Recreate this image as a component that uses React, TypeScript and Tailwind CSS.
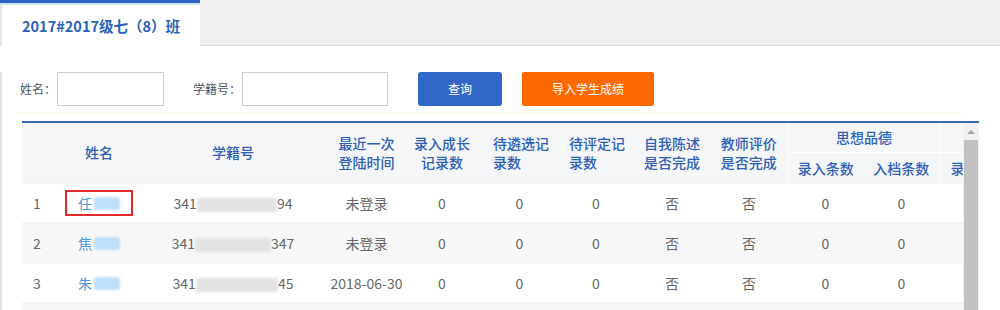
const rows = [
  { no: 1, first: '任', idTail: '94', blurW: 80, login: '未登录', boxed: true },
  { no: 2, first: '焦', idTail: '347', blurW: 76, login: '未登录', boxed: false },
  { no: 3, first: '朱', idTail: '45', blurW: 82, login: '2018-06-30', boxed: false },
]

// last column is the clipped start of the next group
const cols = [40, 74, 194, 73, 78, 77, 76, 76, 78, 75, 77, 77]

function Blur({ w, tone }: { w: number; tone: 'blue' | 'gray' }) {
  return (
    <span
      className={
        tone === 'blue'
          ? 'inline-block h-[13px] rounded-[2px] bg-[#bfe0f8] blur-[1px] align-middle'
          : 'inline-block h-[14px] bg-[#e2e2e2] blur-[1.5px] align-middle'
      }
      style={{ width: w }}
    />
  )
}

export default function App() {
  return (
    <div className="h-[310px] w-[1000px] overflow-hidden bg-white font-['Noto_Sans_CJK_SC',sans-serif]">
      {/* tab strip */}
      <div className="flex h-[46px]">
        <div className="flex w-[200px] flex-col bg-white">
          <div className="h-[3px] bg-[#2f64c4]" />
          <div className="h-[2px] bg-[#cfe5f7]" />
          <div className="flex flex-1 items-center border-l-2 border-[#e6e6e6] pl-[20px] text-[14.5px] font-bold text-[#2c62b8]">
            2017#2017级七（8）班
          </div>
        </div>
        <div className="flex-1 border-b border-[#dadada] bg-[#f0f0f0]" />
      </div>

      <div className="h-[264px] border-l-2 border-[#e3e3e3]">
        {/* search */}
        <div className="mt-[26px] flex h-[34px] items-center pl-[18px] text-[12px] text-[#555]">
          <span>姓名：</span>
          <input className="ml-px h-[34px] w-[107px] border border-[#cccccc] outline-none" />
          <span className="ml-[29px]">学籍号：</span>
          <input className="ml-px h-[34px] w-[146px] border border-[#cccccc] outline-none" />
          <button className="ml-[30px] h-[34px] w-[84px] rounded-[3px] bg-[#3167c8] text-white">查询</button>
          <button className="ml-[20px] h-[34px] w-[132px] rounded-[2px] bg-[#ff6a00] text-white">导入学生成绩</button>
        </div>
        <div className="ml-[15px] mt-[6px] h-[2px] w-[945px] bg-[#fdf8ec]" />

        {/* table */}
        <div className="ml-[20px] mt-[7px] flex w-[957px] border-t-2 border-[#3a68b3]">
          <div className="w-[941px] shrink-0 overflow-hidden">
            <table className="w-[995px] table-fixed border-collapse text-center">
              <colgroup>
                {cols.map((w, i) => (
                  <col key={i} style={{ width: w }} />
                ))}
              </colgroup>
              <thead className="bg-[#f5f6f8] text-[14px] leading-[19px] text-[#2e60b5]">
                <tr className="h-[29px]">
                  <th rowSpan={2} />
                  <th rowSpan={2} className="font-medium">姓名</th>
                  <th rowSpan={2} className="font-medium">学籍号</th>
                  <th rowSpan={2} className="font-medium">最近一次<br />登陆时间</th>
                  <th rowSpan={2} className="font-medium">录入成长<br />记录数</th>
                  <th rowSpan={2} className="pl-[12px] text-left font-medium">待遴选记<br />录数</th>
                  <th rowSpan={2} className="pl-[11px] text-left font-medium">待评定记<br />录数</th>
                  <th rowSpan={2} className="font-medium">自我陈述<br />是否完成</th>
                  <th rowSpan={2} className="font-medium">教师评价<br />是否完成</th>
                  <th colSpan={2} className="border-b border-l border-white font-medium">思想品德</th>
                  <th className="border-b border-l border-white" />
                </tr>
                <tr className="h-[31px]">
                  <th className="border-l border-white pt-[2px] font-medium">录入条数</th>
                  <th className="pt-[2px] font-medium">入档条数</th>
                  <th className="whitespace-nowrap border-l border-white pl-[10px] pt-[2px] text-left font-medium">录</th>
                </tr>
              </thead>
              <tbody className="text-[14px] text-[#666]">
                {rows.map((r) => (
                  <tr
                    key={r.no}
                    className={
                      r.no % 2 === 0
                        ? 'h-[40px] border-t border-[#eeeeee] bg-[#f7f7f7]'
                        : 'h-[40px] border-t border-[#f3f3f3] bg-white'
                    }
                  >
                    <td className="pl-[11px] text-left">{r.no}</td>
                    <td>
                      <span
                        className={
                          r.boxed
                            ? 'inline-flex h-[26px] w-[68px] items-center justify-center gap-[2px] border-2 border-[#e32a2a] text-[#4a98e0]'
                            : 'inline-flex items-center gap-[2px] text-[#4a98e0]'
                        }
                      >
                        {r.first}
                        <Blur w={26} tone="blue" />
                      </span>
                    </td>
                    <td className="whitespace-nowrap">
                      341
                      <Blur w={r.blurW} tone="gray" />
                      {r.idTail}
                    </td>
                    <td className="whitespace-nowrap">{r.login}</td>
                    <td>0</td>
                    <td>0</td>
                    <td>0</td>
                    <td>否</td>
                    <td>否</td>
                    <td>0</td>
                    <td>0</td>
                    <td />
                  </tr>
                ))}
                <tr className="h-[40px] border-t border-[#eeeeee] bg-[#f7f7f7]">
                  <td colSpan={12} />
                </tr>
              </tbody>
            </table>
          </div>

          {/* scrollbar */}
          <div className="flex w-[16px] shrink-0 flex-col bg-[#f1f1f1]">
            <div className="flex h-[17px] items-center justify-center">
              <div className="h-0 w-0 border-x-[4px] border-b-[4px] border-x-transparent border-b-[#a3a3a3]" />
            </div>
            <div className="mx-px flex-1 bg-[#c1c1c1]" />
          </div>
        </div>
      </div>
    </div>
  )
}
